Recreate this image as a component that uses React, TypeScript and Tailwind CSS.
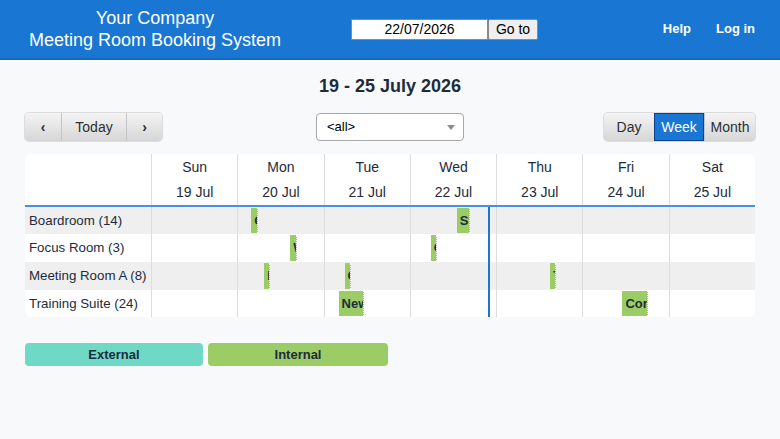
import React from 'react'

type Booking = { day: number; pos: string; label: string }

const days = [
  { name: 'Sun', date: '19 Jul' },
  { name: 'Mon', date: '20 Jul' },
  { name: 'Tue', date: '21 Jul' },
  { name: 'Wed', date: '22 Jul' },
  { name: 'Thu', date: '23 Jul' },
  { name: 'Fri', date: '24 Jul' },
  { name: 'Sat', date: '25 Jul' }
]

const rooms: { name: string; height: string; shaded: boolean; bookings: Booking[] }[] = [
  {
    name: 'Boardroom (14)',
    height: 'h-[27px]',
    shaded: true,
    bookings: [
      { day: 1, pos: 'left-[13px] w-[7px]', label: 'Catch-up' },
      { day: 3, pos: 'left-[46px] w-[13px]', label: 'Strategy' }
    ]
  },
  {
    name: 'Focus Room (3)',
    height: 'h-[28px]',
    shaded: false,
    bookings: [
      { day: 1, pos: 'left-[52px] w-[7px]', label: 'Workshop' },
      { day: 3, pos: 'left-[20px] w-[6px]', label: 'One-to-one' }
    ]
  },
  {
    name: 'Meeting Room A (8)',
    height: 'h-[28px]',
    shaded: true,
    bookings: [
      { day: 1, pos: 'left-[26px] w-[6px]', label: 'Interview' },
      { day: 2, pos: 'left-[20px] w-[6px]', label: 'Call' },
      { day: 4, pos: 'left-[53px] w-[6px]', label: 'Team' }
    ]
  },
  {
    name: 'Training Suite (24)',
    height: 'h-[27px]',
    shaded: false,
    bookings: [
      { day: 2, pos: 'left-[14px] w-[25px]', label: 'New starters' },
      { day: 5, pos: 'left-[39px] w-[26px]', label: 'Conference' }
    ]
  }
]

function Header() {
  return (
    <header className="flex h-[60px] items-center border-b-2 border-[#1667c4] bg-[#1976d2] text-white">
      <div className="w-[310px] text-center text-[18px] leading-[22px]">
        <div>Your Company</div>
        <div>Meeting Room Booking System</div>
      </div>
      <form className="ml-[41px] flex items-center" onSubmit={(e) => e.preventDefault()}>
        <input
          className="h-[21px] w-[137px] border border-[#8a8a8a] bg-white text-center text-[14px] text-black outline-none"
          defaultValue="22/07/2026"
        />
        <button className="h-[21px] w-[50px] rounded-[2px] border border-[#8a8a8a] bg-[#efefef] text-[14px] leading-[19px] text-black">
          Go to
        </button>
      </form>
      <nav className="ml-auto mr-[25px] flex gap-[25px] text-[13px] font-bold">
        <span>Help</span>
        <span>Log in</span>
      </nav>
    </header>
  )
}

const btn =
  'flex h-full items-center justify-center bg-gradient-to-b from-[#f4f4f4] to-[#d6d6d6] text-[14px] text-[#2a2f36]'

function Controls() {
  return (
    <div className="mt-[15px] grid h-[28px] grid-cols-3 items-center">
      <div className="flex h-full w-[137px] overflow-hidden rounded-[4px] shadow-[0_0_0_1px_#dcdcdc]">
        <div className={`${btn} w-[36px] font-bold`}>‹</div>
        <div className={`${btn} w-[66px] border-x border-[#c4c4c4]`}>Today</div>
        <div className={`${btn} w-[35px] font-bold`}>›</div>
      </div>
      <div className="flex justify-center">
        <div className="relative flex h-[28px] w-[148px] items-center rounded-[4px] border border-[#a8a8a8] bg-white pl-[10px] text-[13px] text-black">
          &lt;all&gt;
          <span className="absolute right-[8px] top-[11px] h-0 w-0 border-x-[4px] border-t-[5px] border-x-transparent border-t-[#8c8c8c]" />
        </div>
      </div>
      <div className="flex justify-end">
        <div className="flex h-[28px] overflow-hidden rounded-[4px] shadow-[0_0_0_1px_#dcdcdc]">
          <div className={`${btn} w-[50px]`}>Day</div>
          <div className="flex h-full w-[50px] items-center justify-center border border-[#0e3f8a] bg-[#1976d2] text-[14px] text-white">
            Week
          </div>
          <div className={`${btn} w-[51px] border-l border-[#c4c4c4]`}>Month</div>
        </div>
      </div>
    </div>
  )
}

function Grid() {
  return (
    <div className="mt-[13px] overflow-hidden rounded-[6px] bg-white text-[14px]">
      <div className="grid h-[53px] grid-cols-[126px_repeat(7,1fr)] border-b-2 border-[#4a90e2]">
        <div />
        {days.map((d) => (
          <div key={d.name} className="flex flex-col items-center border-l border-[#dddddd] pt-[5px] leading-[16px]">
            <span>{d.name}</span>
            <span className="mt-[9px]">{d.date}</span>
          </div>
        ))}
      </div>
      <div className="relative">
        {rooms.map((room) => (
          <div
            key={room.name}
            className={`grid grid-cols-[126px_repeat(7,1fr)] ${room.height} ${room.shaded ? 'bg-[#efefef]' : 'bg-white'}`}
          >
            <div className="flex items-center whitespace-nowrap pl-[4px] text-[13.3px]">{room.name}</div>
            {days.map((d, i) => (
              <div key={d.name} className="relative border-l border-[#dddddd]">
                {room.bookings
                  .filter((b) => b.day === i)
                  .map((b) => (
                    <div
                      key={b.label}
                      className={`absolute top-px bottom-px ${b.pos} overflow-hidden whitespace-nowrap border-r border-dotted border-white bg-[#9ccc65] pl-[3px] text-[13px] font-bold leading-[25px] text-[#1c2b3d]`}
                    >
                      {b.label}
                    </div>
                  ))}
              </div>
            ))}
          </div>
        ))}
        <div className="absolute bottom-0 left-[463px] top-0 w-[2px] bg-[#1976d2]" />
      </div>
    </div>
  )
}

export default function App() {
  return (
    <div className="h-[439px] w-[780px] bg-[#f8f9fb] font-['Liberation_Sans',Arial,sans-serif] text-[#1c2b3d]">
      <Header />
      <main className="px-[25px]">
        <h2 className="mt-[14px] text-center text-[18px] font-bold leading-[24px]">19 - 25 July 2026</h2>
        <Controls />
        <Grid />
        <div className="mt-[26px] flex gap-[5px] text-[13px] font-bold">
          <div className="flex h-[23px] w-[178px] items-center justify-center rounded-[4px] bg-[#6fd9c5]">External</div>
          <div className="flex h-[23px] w-[180px] items-center justify-center rounded-[4px] bg-[#9ccc65]">Internal</div>
        </div>
      </main>
    </div>
  )
}
